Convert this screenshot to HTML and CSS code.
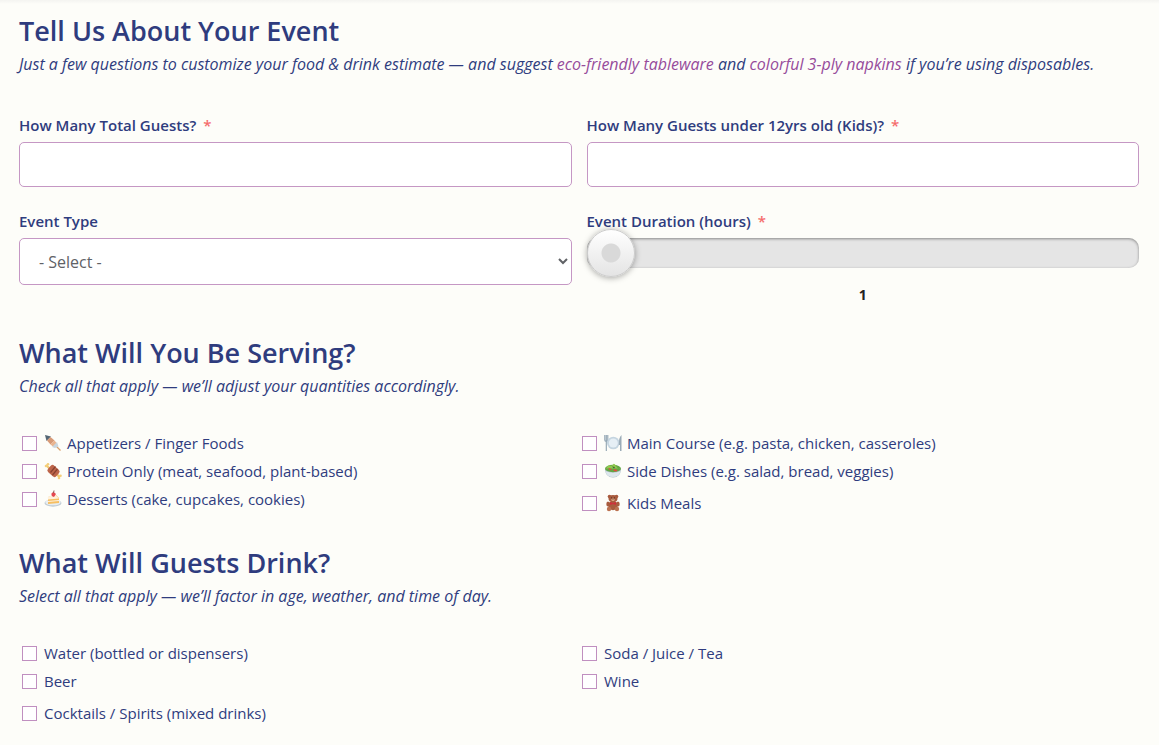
FILE: index.html
```html
<!DOCTYPE html>
<html lang="en">
<head>
<meta charset="utf-8">
<meta name="viewport" content="width=device-width, initial-scale=1">
<title>Tell Us About Your Event</title>
<link rel="stylesheet" href="styles.css">
</head>
<body>
<form class="event-form">
	<section class="section">
		<h2>Tell Us About Your Event</h2>
		<p class="intro">Just a few questions to customize your food &amp; drink estimate — and suggest <a href="#tableware">eco-friendly tableware</a> and <a href="#napkins">colorful 3-ply napkins</a> if you’re using disposables.</p>
		<div class="fields">
			<div class="field">
				<label for="guests">How Many Total Guests? <span class="req">*</span></label>
				<input type="text" id="guests" name="guests" inputmode="numeric" required>
			</div>
			<div class="field">
				<label for="kids">How Many Guests under 12yrs old (Kids)? <span class="req">*</span></label>
				<input type="text" id="kids" name="kids" inputmode="numeric" required>
			</div>
			<div class="field">
				<label for="type">Event Type</label>
				<select id="type" name="type">
					<option>- Select -</option>
				</select>
			</div>
			<div class="field">
				<label for="hours">Event Duration (hours) <span class="req">*</span></label>
				<input type="range" id="hours" name="hours" min="1" max="12" value="1">
				<output for="hours">1</output>
			</div>
		</div>
	</section>

	<section class="section">
		<h2>What Will You Be Serving?</h2>
		<p class="intro">Check all that apply — we’ll adjust your quantities accordingly.</p>
		<div class="checks">
			<label><input type="checkbox" name="food">
				<svg class="emoji" viewBox="0 0 18 18" aria-hidden="true"><path d="M11 11l5.500 5.500" stroke="#d9a06c" stroke-width="1.300"/><path d="M1 1l6 1.500L2.500 7z" fill="#546674"/><path d="M3 6.500L6.500 3l4 3.500L6.500 10.500z" fill="#d79a77"/><path d="M6.500 10.500l4-4 2.500 3-3.500 3.500z" fill="#e9b48f"/><path d="M8 13l5-5 1.500 4.500L11 14z" fill="#c9d5dd"/></svg>
				Appetizers / Finger Foods</label>
			<label><input type="checkbox" name="food">
				<svg class="emoji" viewBox="0 0 18 18" aria-hidden="true"><path d="M.8 1v5q0 1.500 1.500 1.500V17M2.300 1v6M3.800 1v5q0 1.500-1.500 1.500" fill="none" stroke="#8fa3b1" stroke-width="1.100"/><circle cx="9.300" cy="9" r="6.300" fill="#c5d5e0"/><circle cx="9.300" cy="9" r="4.500" fill="#e6eff5"/><path d="M17.500 1v16H16v-6h-1.200q0-8 2.700-10z" fill="#9bacb8"/></svg>
				Main Course (e.g. pasta, chicken, casseroles)</label>
			<label><input type="checkbox" name="food">
				<svg class="emoji" viewBox="0 0 18 18" aria-hidden="true"><path d="M2 3l4 4M12 12l4 3" stroke="#f1c970" stroke-width="2.200"/><circle cx="2" cy="4" r="1.300" fill="#f4cf7b"/><circle cx="4" cy="2.200" r="1.300" fill="#f4cf7b"/><circle cx="15" cy="16" r="1.300" fill="#f4cf7b"/><circle cx="16.500" cy="13.700" r="1.300" fill="#f4cf7b"/><rect x="4" y="4.500" width="11" height="9" rx="2.500" transform="rotate(42 9.500 9)" fill="#bd654a"/><path d="M11.500 4.500l-5 6M13.500 7l-5 6" stroke="#87402f" stroke-width="1.200"/></svg>
				Protein Only (meat, seafood, plant-based)</label>
			<label><input type="checkbox" name="food">
				<svg class="emoji" viewBox="0 0 18 18" aria-hidden="true"><path d="M1 7h16q-.5 8.500-8 8.500T1 7z" fill="#a9b9c4"/><path d="M1.500 9q7.500 3 15 0-1 6-7.500 6T1.500 9z" fill="#dde7ec"/><ellipse cx="9" cy="6.500" rx="8" ry="3.700" fill="#62a744"/><path d="M2 6.500q2-4 4-3t3-1 3 1.500 4 2.500" fill="#91c84e"/><path d="M4 6l4 1-2 1.500zM10 7l3.500 1-1 1.500-3-.5z" fill="#df4b42"/><path d="M8 4.500l3 .5-1 1.500z" fill="#355f38"/></svg>
				Side Dishes (e.g. salad, bread, veggies)</label>
			<label><input type="checkbox" name="food">
				<svg class="emoji" viewBox="0 0 18 18" aria-hidden="true"><ellipse cx="9" cy="13" rx="8.500" ry="3.700" fill="#c0cbd3"/><ellipse cx="9" cy="12.300" rx="7.700" ry="3" fill="#e8eef2"/><path d="M4 7l8-2 3 3v5l-11 1z" fill="#f6bf62"/><path d="M3.800 7L11 4.500l4 4L4 9.500z" fill="#fff1dc"/><path d="M4 11.500l11-1" stroke="#fff1dc"/><path d="M7.500 3.500q2-2.500 4.500.5L10 7Q7 6.500 7.500 3.500z" fill="#e5464f"/><path d="M9.500 3L10 .5" stroke="#8e5951"/></svg>
				Desserts (cake, cupcakes, cookies)</label>
			<label><input type="checkbox" name="food">
				<svg class="emoji" viewBox="0 0 18 18" aria-hidden="true"><g fill="#a85b3e"><circle cx="5.500" cy="2.500" r="1.800"/><circle cx="12.500" cy="2.500" r="1.800"/><ellipse cx="9" cy="4.500" rx="4.500" ry="3.500"/><ellipse cx="9" cy="11.500" rx="4.800" ry="4.700"/><ellipse cx="4" cy="10" rx="1.700" ry="2.500"/><ellipse cx="14" cy="10" rx="1.700" ry="2.500"/></g><circle cx="5" cy="15" r="2.200" fill="#bc7251"/><circle cx="13" cy="15" r="2.200" fill="#bc7251"/><ellipse cx="9" cy="5.700" rx="1.700" ry="1.200" fill="#dfad8a"/><path d="M7 3.800h.8M10.200 3.800h.8M8.600 5.200h.8" stroke="#432b25"/><path d="M6 8l3 1 3-1v3L9 10l-3 1z" fill="#cf2f3b"/></svg>
				Kids Meals</label>
		</div>
	</section>

	<section class="section">
		<h2>What Will Guests Drink?</h2>
		<p class="intro">Select all that apply — we’ll factor in age, weather, and time of day.</p>
		<div class="checks">
			<label><input type="checkbox" name="drink"> Water (bottled or dispensers)</label>
			<label><input type="checkbox" name="drink"> Soda / Juice / Tea</label>
			<label><input type="checkbox" name="drink"> Beer</label>
			<label><input type="checkbox" name="drink"> Wine</label>
			<label><input type="checkbox" name="drink"> Cocktails / Spirits (mixed drinks)</label>
		</div>
	</section>
</form>
<script>
document.getElementById('hours').oninput = function () {
	document.querySelector('output').value = this.value;
};
</script>
</body>
</html>
```
FILE: styles.css
```css
* { box-sizing: border-box; }
body { margin: 0; background: linear-gradient(#f4f4f1, #fdfdf9 4px) no-repeat #fdfdf9; color: #2f3c7e; font: 15px/24px "Segoe UI", "Open Sans", "Noto Sans", sans-serif; }
h2, p { margin: 0; }
.event-form { padding: 13px 20px 16px 19px; }
.section { margin-bottom: 28px; }
.section:last-child { margin-bottom: 0; }
h2 { font-size: 27px; line-height: 36px; font-weight: 600; margin-bottom: 3px; }
.intro { font-size: 16px; font-style: italic; }
.intro a { color: #964b9b; text-decoration: none; }

.fields { display: grid; grid-template-columns: 1fr 1fr; gap: 22px 15px; margin-top: 37px; }
.field label { display: block; font-weight: 600; margin-bottom: 5px; }
.req { color: #f56c6c; line-height: 1; margin-left: 3px; }
.field input[type=text], .field select { display: block; width: 100%; height: 45px; padding: 10px 15px; border: 1px solid #c597c4; border-radius: 5px; background: #fff; color: #606266; font: inherit; font-size: 16px; }
.field select { height: 47px; }

input[type=range] { -webkit-appearance: none; appearance: none; display: block; width: 100%; height: 30px; margin: 0; border-radius: 10px; background: #e5e5e5; box-shadow: inset 0 1px 3px rgba(0, 0, 0, .4); }
input[type=range]::-webkit-slider-thumb { -webkit-appearance: none; width: 48px; height: 48px; border: 1px solid #ccc; border-radius: 50%; background: radial-gradient(circle, #d9d9d9 9px, transparent 10px), linear-gradient(#fff, #e4e4e4); box-shadow: 0 1px 6px rgba(0, 0, 0, .35); }
output { display: block; margin-top: 15px; text-align: center; font-weight: 700; font-size: 14px; color: #222; }

.checks { display: grid; grid-template-columns: 1fr 1fr; align-items: start; margin-top: 31px; }
.checks label { display: flex; align-items: center; height: 28px; padding-left: 3px; }
.checks label:last-child { margin-top: 4px; }
.checks input { -webkit-appearance: none; appearance: none; width: 15px; height: 15px; margin: 0 7px 0 0; border: 1px solid #c08fc0; background: #fff; }
.checks input:checked { background: #c08fc0; }
.emoji { width: 18px; height: 18px; margin-right: 5px; }
```
